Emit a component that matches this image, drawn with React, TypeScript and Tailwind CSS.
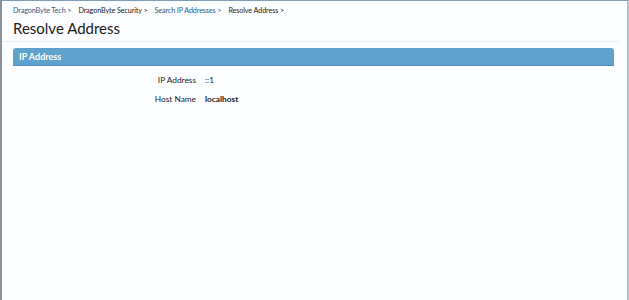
import React from "react";

export default function App() {
  const font = { fontFamily: "Lato, 'Liberation Sans', sans-serif" };
  return (
    <div
      className="w-[629px] h-[300px] bg-[#fcfdff] border-t border-t-[#7d9cb8] border-l-2 border-l-[#8a9299] border-r-2 border-r-[#b9c0c6] flex flex-col"
      style={font}
    >
      <div className="px-[11px] pt-[4px] flex flex-col">
        <div className="flex items-center text-[7.2px] leading-[12px] gap-[7px] tracking-[-0.1px]">
          <span className="text-[#2b5c8a]">DragonByte Tech &gt;</span>
          <span className="text-[#222]">DragonByte Security &gt;</span>
          <span className="text-[#2b5c8a]">Search IP Addresses &gt;</span>
          <span className="text-[#222]">Resolve Address &gt;</span>
        </div>
        <div className="text-[15px] leading-[20px] text-[#1a1a1a] mt-[1px]">Resolve Address</div>
      </div>
      <div className="h-px bg-[#e8eef4] mt-[3px] mr-[8px]" />
      <div className="px-[11px] pr-[13px] mt-[6px]">
        <div className="h-[18px] bg-[#5fa2cd] rounded-t-[3px] border-b border-b-[#4e8dba] flex items-center px-[6px]">
          <span className="text-white font-bold text-[9px]">IP Address</span>
        </div>
        <div className="grid grid-cols-[183px_1fr] gap-x-[9px] gap-y-[8px] mt-[9px] text-[8.3px] leading-[11px] text-[#222]">
          <div className="text-right">IP Address</div>
          <div>::1</div>
          <div className="text-right">Host Name</div>
          <div className="font-bold">localhost</div>
        </div>
      </div>
    </div>
  );
}
